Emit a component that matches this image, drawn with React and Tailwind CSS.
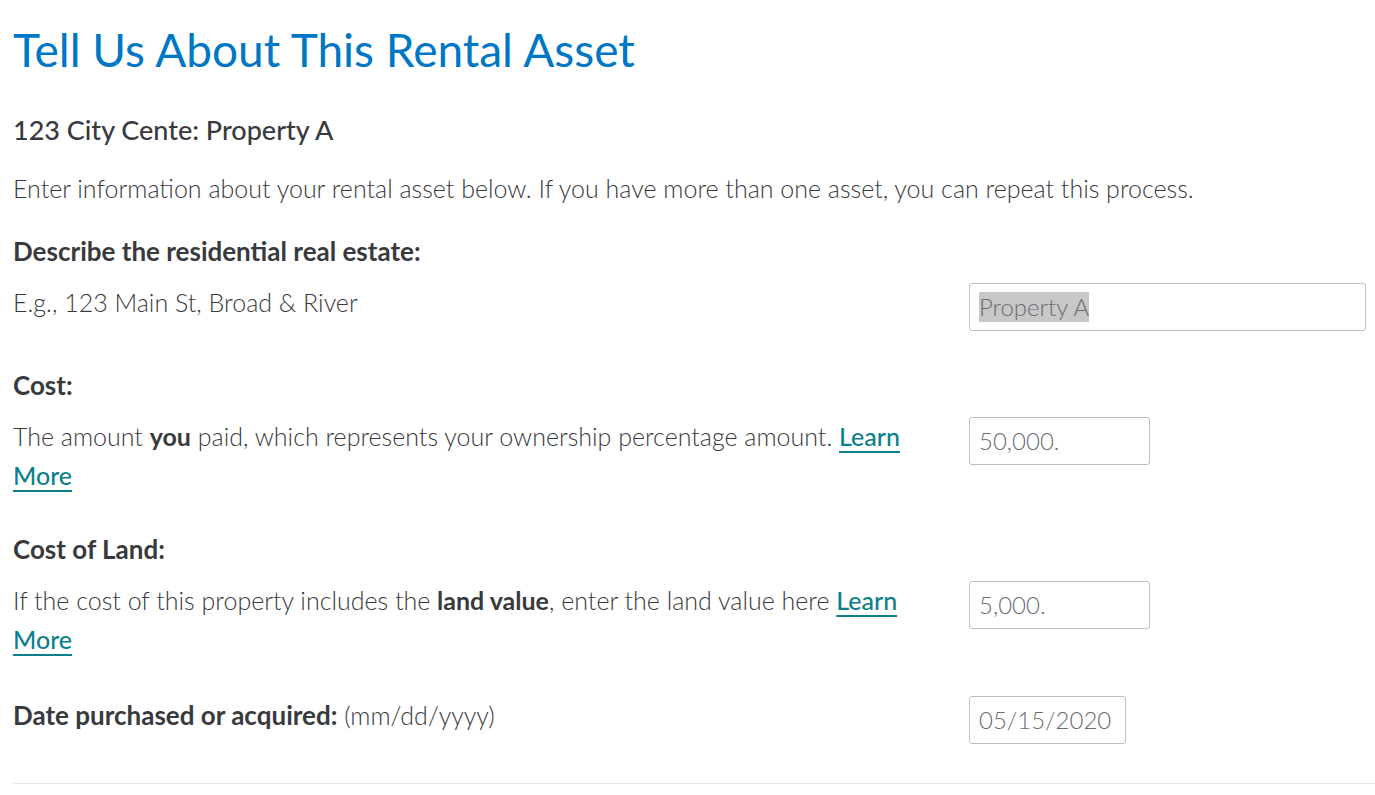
import React from 'react'

const font = { fontFamily: 'Lato, "Noto Sans", sans-serif' }

function Field({ value, width, selected }) {
    return (
        <div className={`${width} h-[48px] shrink-0 border border-[#babec5] rounded-[3px] px-[9px] flex items-center text-[24px] font-light text-[#6b6c72] bg-white`}>
            {selected
                ? <span className='bg-[#c8c8c8] leading-[30px]'>{value}</span>
                : <span className='leading-[30px]'>{value}</span>}
        </div>
    )
}

function LearnMore() {
    return (
        <a href='#' className='text-[#0d7f8c] font-medium underline decoration-2 underline-offset-[5px]'>Learn More</a>
    )
}

export default function App() {
    return (
        <div style={font} className='bg-white min-h-screen pl-[13px] text-[#393a3d]'>
            <h1 className='pt-[21px] text-[46px] leading-[58px] text-[#0077c5] font-normal'>
                Tell Us About This Rental Asset
            </h1>

            <h2 className='mt-[35px] text-[27px] leading-[32px] font-medium'>
                123 City Cente: Property A
            </h2>

            <p className='mt-[23px] text-[25px] leading-[39px] font-light'>
                Enter information about your rental asset below. If you have more than one asset, you can repeat this process.
            </p>

            {/* Describe */}
            <div className='mt-[24px]'>
                <div className='text-[26px] leading-[39px] font-bold'>Describe the residential real estate:</div>
                <div className='mt-[12px] flex items-start'>
                    <div className='w-[956px] pr-[30px] text-[25px] leading-[39px] font-light'>
                        E.g., 123 Main St, Broad &amp; River
                    </div>
                    <Field value='Property A' width='w-[397px]' selected />
                </div>
            </div>

            {/* Cost */}
            <div className='mt-[35px]'>
                <div className='text-[26px] leading-[39px] font-bold'>Cost:</div>
                <div className='mt-[12px] flex items-start'>
                    <div className='w-[956px] pr-[30px] text-[25px] leading-[39px] font-light'>
                        The amount <b className='font-bold'>you</b> paid, which represents your ownership percentage amount. <LearnMore />
                    </div>
                    <Field value='50,000.' width='w-[181px]' />
                </div>
            </div>

            {/* Cost of Land */}
            <div className='mt-[35px]'>
                <div className='text-[26px] leading-[39px] font-bold'>Cost of Land:</div>
                <div className='mt-[12px] flex items-start'>
                    <div className='w-[956px] pr-[30px] text-[25px] leading-[39px] font-light'>
                        If the cost of this property includes the <b className='font-bold'>land value</b>, enter the land value here <LearnMore />
                    </div>
                    <Field value='5,000.' width='w-[181px]' />
                </div>
            </div>

            {/* Date */}
            <div className='mt-[37px] flex items-start'>
                <div className='w-[956px] pr-[30px] text-[25px] leading-[39px] font-light'>
                    <b className='font-bold text-[26px]'>Date purchased or acquired:</b> (mm/dd/yyyy)
                </div>
                <Field value='05/15/2020' width='w-[157px]' />
            </div>

            <div className='mt-[39px] border-t border-[#e4e5e7]'></div>
        </div>
    )
}
